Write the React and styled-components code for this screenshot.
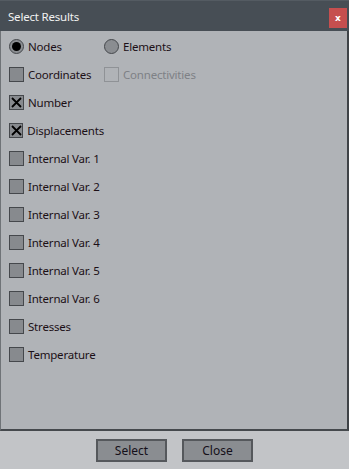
import React from "react";
import styled, { createGlobalStyle } from "styled-components";

const Global = createGlobalStyle`
  html, body { margin: 0; padding: 0; background: #c2c4c7; }
  body { font-family: "Noto Sans", "DejaVu Sans", sans-serif; }
`;

const Window = styled.div`
  width: 349px;
  height: 469px;
  display: flex;
  flex-direction: column;
  background: #c2c4c7;
`;

const TitleBar = styled.div`
  height: 31px;
  flex: none;
  background: #474e55;
  border-top: 1px solid #545b62;
  box-sizing: border-box;
  display: flex;
  align-items: center;
  justify-content: space-between;
  padding: 0 2px 0 8px;
`;

const Title = styled.span`
  color: #f2f2f2;
  font-size: 11.5px;
  letter-spacing: -0.2px;
`;

const CloseBtn = styled.div`
  width: 18px;
  height: 20px;
  margin-top: 4px;
  background: #c64f4f;
  color: #ffffff;
  font-size: 9px;
  font-weight: bold;
  display: flex;
  align-items: center;
  justify-content: center;
  font-family: "DejaVu Sans", sans-serif;
`;

const Panel = styled.div`
  flex: 1;
  background: #b0b3b7;
  border-left: 1px solid #6f7377;
  border-right: 2px solid #3f4347;
  border-bottom: 2px solid #45494d;
  padding: 1px 0 0 8px;
  display: flex;
  flex-direction: column;
`;

const Row = styled.div`
  height: 28px;
  display: grid;
  grid-template-columns: 95px auto;
  align-items: center;
`;

const Item = styled.div`
  display: flex;
  align-items: center;
  gap: 4px;
  font-size: 11.5px;
  color: ${(p) => (p.$disabled ? "#7e8186" : "#1c1016")};
  letter-spacing: -0.2px;
  white-space: nowrap;
`;

const RadioCircle = styled.span`
  width: 15px;
  height: 15px;
  box-sizing: border-box;
  border-radius: 50%;
  border: 1px solid #45484c;
  background: #8a8d91;
  display: flex;
  align-items: center;
  justify-content: center;
  &::after {
    content: "";
    display: ${(p) => (p.$checked ? "block" : "none")};
    width: 9px;
    height: 9px;
    border-radius: 50%;
    background: #000;
  }
`;

const Box = styled.span`
  width: 15px;
  height: 15px;
  box-sizing: border-box;
  border: 1px solid ${(p) => (p.$disabled ? "#8f9296" : "#45484c")};
  background: ${(p) => (p.$disabled ? "transparent" : "#878a8e")};
  display: flex;
  align-items: center;
  justify-content: center;
`;

const Footer = styled.div`
  height: 38px;
  flex: none;
  display: flex;
  justify-content: center;
  align-items: center;
  gap: 15px;
`;

const Button = styled.div`
  width: 71px;
  height: 23px;
  box-sizing: border-box;
  border: 2px solid #55585c;
  background: #8a8d91;
  color: #15101a;
  font-size: 12px;
  display: flex;
  align-items: center;
  justify-content: center;
`;

const Radio = ({ checked, label }) => (
  <Item>
    <RadioCircle $checked={checked} />
    {label}
  </Item>
);

const Check = ({ checked, disabled, label }) => (
  <Item $disabled={disabled}>
    <Box $disabled={disabled}>
      {checked && (
        <svg width="11" height="11" viewBox="0 0 11 11">
          <path d="M1 1 L10 10 M10 1 L1 10" stroke="#000" strokeWidth="1.8" />
        </svg>
      )}
    </Box>
    {label}
  </Item>
);

const items = [
  ["Number", true],
  ["Displacements", true],
  ["Internal Var. 1", false],
  ["Internal Var. 2", false],
  ["Internal Var. 3", false],
  ["Internal Var. 4", false],
  ["Internal Var. 5", false],
  ["Internal Var. 6", false],
  ["Stresses", false],
  ["Temperature", false],
];

export default function App() {
  return (
    <Window>
      <Global />
      <TitleBar>
        <Title>Select Results</Title>
        <CloseBtn>x</CloseBtn>
      </TitleBar>
      <Panel>
        <Row>
          <Radio checked label="Nodes" />
          <Radio label="Elements" />
        </Row>
        <Row>
          <Check label="Coordinates" />
          <Check disabled label="Connectivities" />
        </Row>
        {items.map(([label, checked]) => (
          <Row key={label}>
            <Check checked={checked} label={label} />
          </Row>
        ))}
      </Panel>
      <Footer>
        <Button>Select</Button>
        <Button>Close</Button>
      </Footer>
    </Window>
  );
}
